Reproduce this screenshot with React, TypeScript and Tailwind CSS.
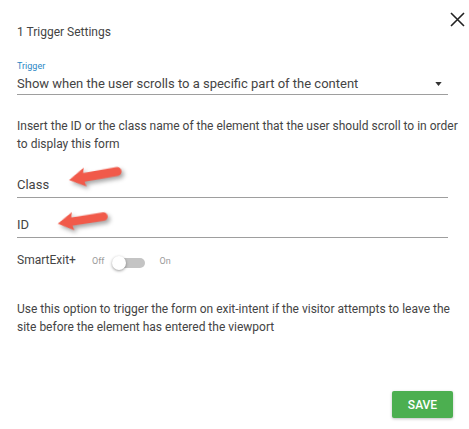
import React from 'react';

const Arrow = ({ className }: { className: string }) => (
  <svg
    viewBox="0 0 60 22"
    className={className}
    style={{ filter: 'drop-shadow(2px 3px 2px rgba(0,0,0,0.35))' }}
  >
    <path
      d="M1 12 L19 1 L17.5 7 L54.5 6 A5 5 0 0 1 54.5 16 L17.5 16.5 L19 22 Z"
      fill="#f15a4a"
    />
  </svg>
);

const Field = ({ label, arrow }: { label: string; arrow: React.ReactNode }) => (
  <div className="relative border-b border-[#9e9e9e] pb-[4px]">
    <span className="block text-[13px] leading-[16px] text-[#444]">{label}</span>
    {arrow}
  </div>
);

export default function App() {
  return (
    <div
      className="relative w-[469px] h-[429px] bg-white px-[17px] pt-[24px] text-[#444]"
      style={{ fontFamily: 'Roboto, "Liberation Sans", sans-serif' }}
    >
      <button className="absolute left-[450px] top-[12px] w-[15px] h-[15px]">
        <svg viewBox="0 0 15 15" className="w-[15px] h-[15px]">
          <path d="M1 1 L14 14 M14 1 L1 14" stroke="#222" strokeWidth="1.6" />
        </svg>
      </button>

      <h2 className="text-[12px] leading-[16px] text-[#444]">1 Trigger Settings</h2>

      <div className="mt-[21px] w-[431px] border-b border-[#9e9e9e] pb-[1px]">
        <div className="text-[9px] leading-[11px] text-[#2a88c5]">Trigger</div>
        <div className="mt-[3px] flex items-center justify-between text-[13px] leading-[18px] text-[#444]">
          <span>Show when the user scrolls to a specific part of the content</span>
          <svg viewBox="0 0 8 5" className="w-[7px] h-[4px] mr-[6px]">
            <path d="M0 0 H8 L4 5 Z" fill="#333" />
          </svg>
        </div>
      </div>

      <p className="mt-[22px] w-[452px] text-[12px] leading-[18px] text-[#444]">
        Insert the ID or the class name of the element that the user should scroll to in order to display this form
      </p>

      <div className="mt-[24px] w-[431px] flex flex-col gap-[19px]">
        <Field
          label="Class"
          arrow={<Arrow className="absolute left-[49px] top-[-12px] w-[58px] h-[20px] -rotate-[9deg]" />}
        />
        <Field
          label="ID"
          arrow={<Arrow className="absolute left-[39px] top-[-7px] w-[53px] h-[19px] -rotate-[8deg]" />}
        />
      </div>

      <div className="mt-[12px] flex items-center h-[20px]">
        <span className="text-[12px] text-[#444] w-[75px]">SmartExit+</span>
        <span className="text-[9px] text-[#9a9a9a] mt-[3px]">Off</span>
        <div className="relative ml-[8px] mt-[5px] w-[33px] h-[14px] flex items-center">
          <div className="ml-[2px] w-[31px] h-[10px] rounded-full bg-[#c4c4c4]" />
          <div className="absolute left-0 top-0 w-[14px] h-[14px] rounded-full bg-white shadow-[0_1px_3px_rgba(0,0,0,0.4)]" />
        </div>
        <span className="text-[9px] text-[#9a9a9a] ml-[14px] mt-[3px]">On</span>
      </div>

      <p className="mt-[30px] w-[440px] text-[12px] leading-[18px] text-[#444]">
        Use this option to trigger the form on exit-intent if the visitor attempts to leave the site before the element has entered the viewport
      </p>

      <button className="absolute left-[392px] top-[391px] w-[61px] h-[27px] rounded-[2px] bg-[#4caf50] text-white text-[12px] font-medium shadow-[0_1px_3px_rgba(0,0,0,0.25)]">
        SAVE
      </button>
    </div>
  );
}
